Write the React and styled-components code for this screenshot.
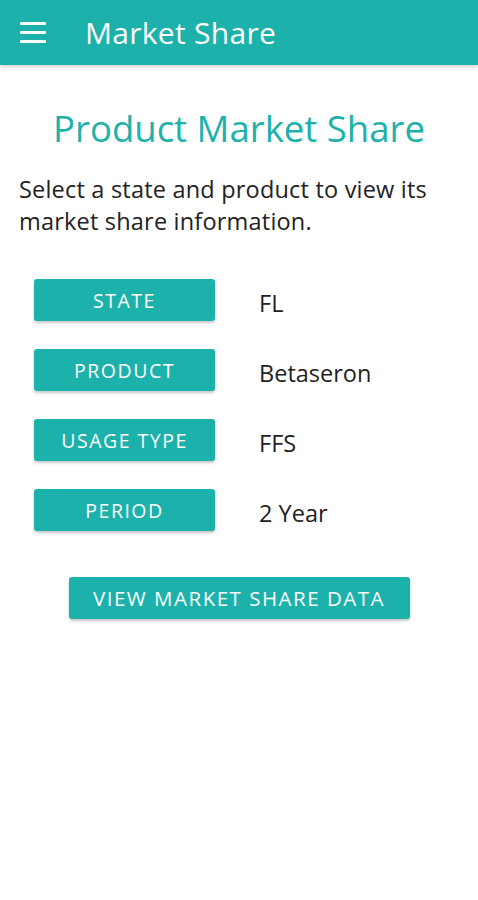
import React from "react";
import styled, { createGlobalStyle } from "styled-components";

const Global = createGlobalStyle`
  html, body { margin: 0; padding: 0; background: #fff; }
  body { font-family: "Open Sans", "Noto Sans", sans-serif; }
`;

const TEAL = "#1cb2ab";

const Page = styled.div`
  width: 478px;
  min-height: 900px;
  background: #fff;
`;

const AppBar = styled.header`
  height: 65px;
  background: ${TEAL};
  display: flex;
  align-items: center;
  padding-left: 20px;
  box-shadow: 0 2px 4px rgba(0,0,0,0.18);
`;

const Menu = styled.div`
  width: 26px;
  display: flex;
  flex-direction: column;
  gap: 6px;
  margin-right: 39px;
  span { display: block; height: 3px; background: #fff; border-radius: 1px; }
`;

const BarTitle = styled.h1`
  margin: 0;
  font-size: 30px;
  font-weight: 400;
  color: #fff;
  letter-spacing: 0.3px;
`;

const Content = styled.main`
  padding: 38px 19px 0;
`;

const Heading = styled.h2`
  margin: 0;
  text-align: center;
  font-size: 36.5px;
  font-weight: 400;
  color: ${TEAL};
  line-height: 50px;
`;

const Intro = styled.p`
  margin: 20px 0 0;
  font-size: 23.5px;
  line-height: 32px;
  color: #222;
  letter-spacing: 0.2px;
`;

const Rows = styled.div`
  margin-top: 42px;
  padding-left: 15px;
  display: flex;
  flex-direction: column;
  gap: 28px;
`;

const Row = styled.div`
  display: flex;
  align-items: center;
`;

const Btn = styled.button`
  height: 42px;
  width: ${p => p.$w || 181}px;
  background: ${TEAL};
  color: #fff;
  border: none;
  border-radius: 3px;
  box-shadow: 0 2px 3px rgba(0,0,0,0.22);
  font-family: "Open Sans", sans-serif;
  font-size: ${p => p.$fs || 19.5}px;
  letter-spacing: 1.5px;
  text-transform: uppercase;
  padding: 0;
  cursor: pointer;
`;

const Value = styled.span`
  margin-left: 44px;
  font-size: 23.5px;
  color: #222;
  padding-top: 6px;
`;

const Footer = styled.div`
  display: flex;
  justify-content: center;
  margin-top: 46px;
`;

const fields = [
  ["State", "FL"],
  ["Product", "Betaseron"],
  ["Usage Type", "FFS"],
  ["Period", "2 Year"],
];

export default function App() {
  return (
    <Page>
      <Global />
      <AppBar>
        <Menu><span /><span /><span /></Menu>
        <BarTitle>Market Share</BarTitle>
      </AppBar>
      <Content>
        <Heading>Product Market Share</Heading>
        <Intro>Select a state and product to view its market share information.</Intro>
        <Rows>
          {fields.map(([l, v]) => (
            <Row key={l}>
              <Btn>{l}</Btn>
              <Value>{v}</Value>
            </Row>
          ))}
        </Rows>
        <Footer>
          <Btn $w={341} $fs={20.5}>View Market Share Data</Btn>
        </Footer>
      </Content>
    </Page>
  );
}
